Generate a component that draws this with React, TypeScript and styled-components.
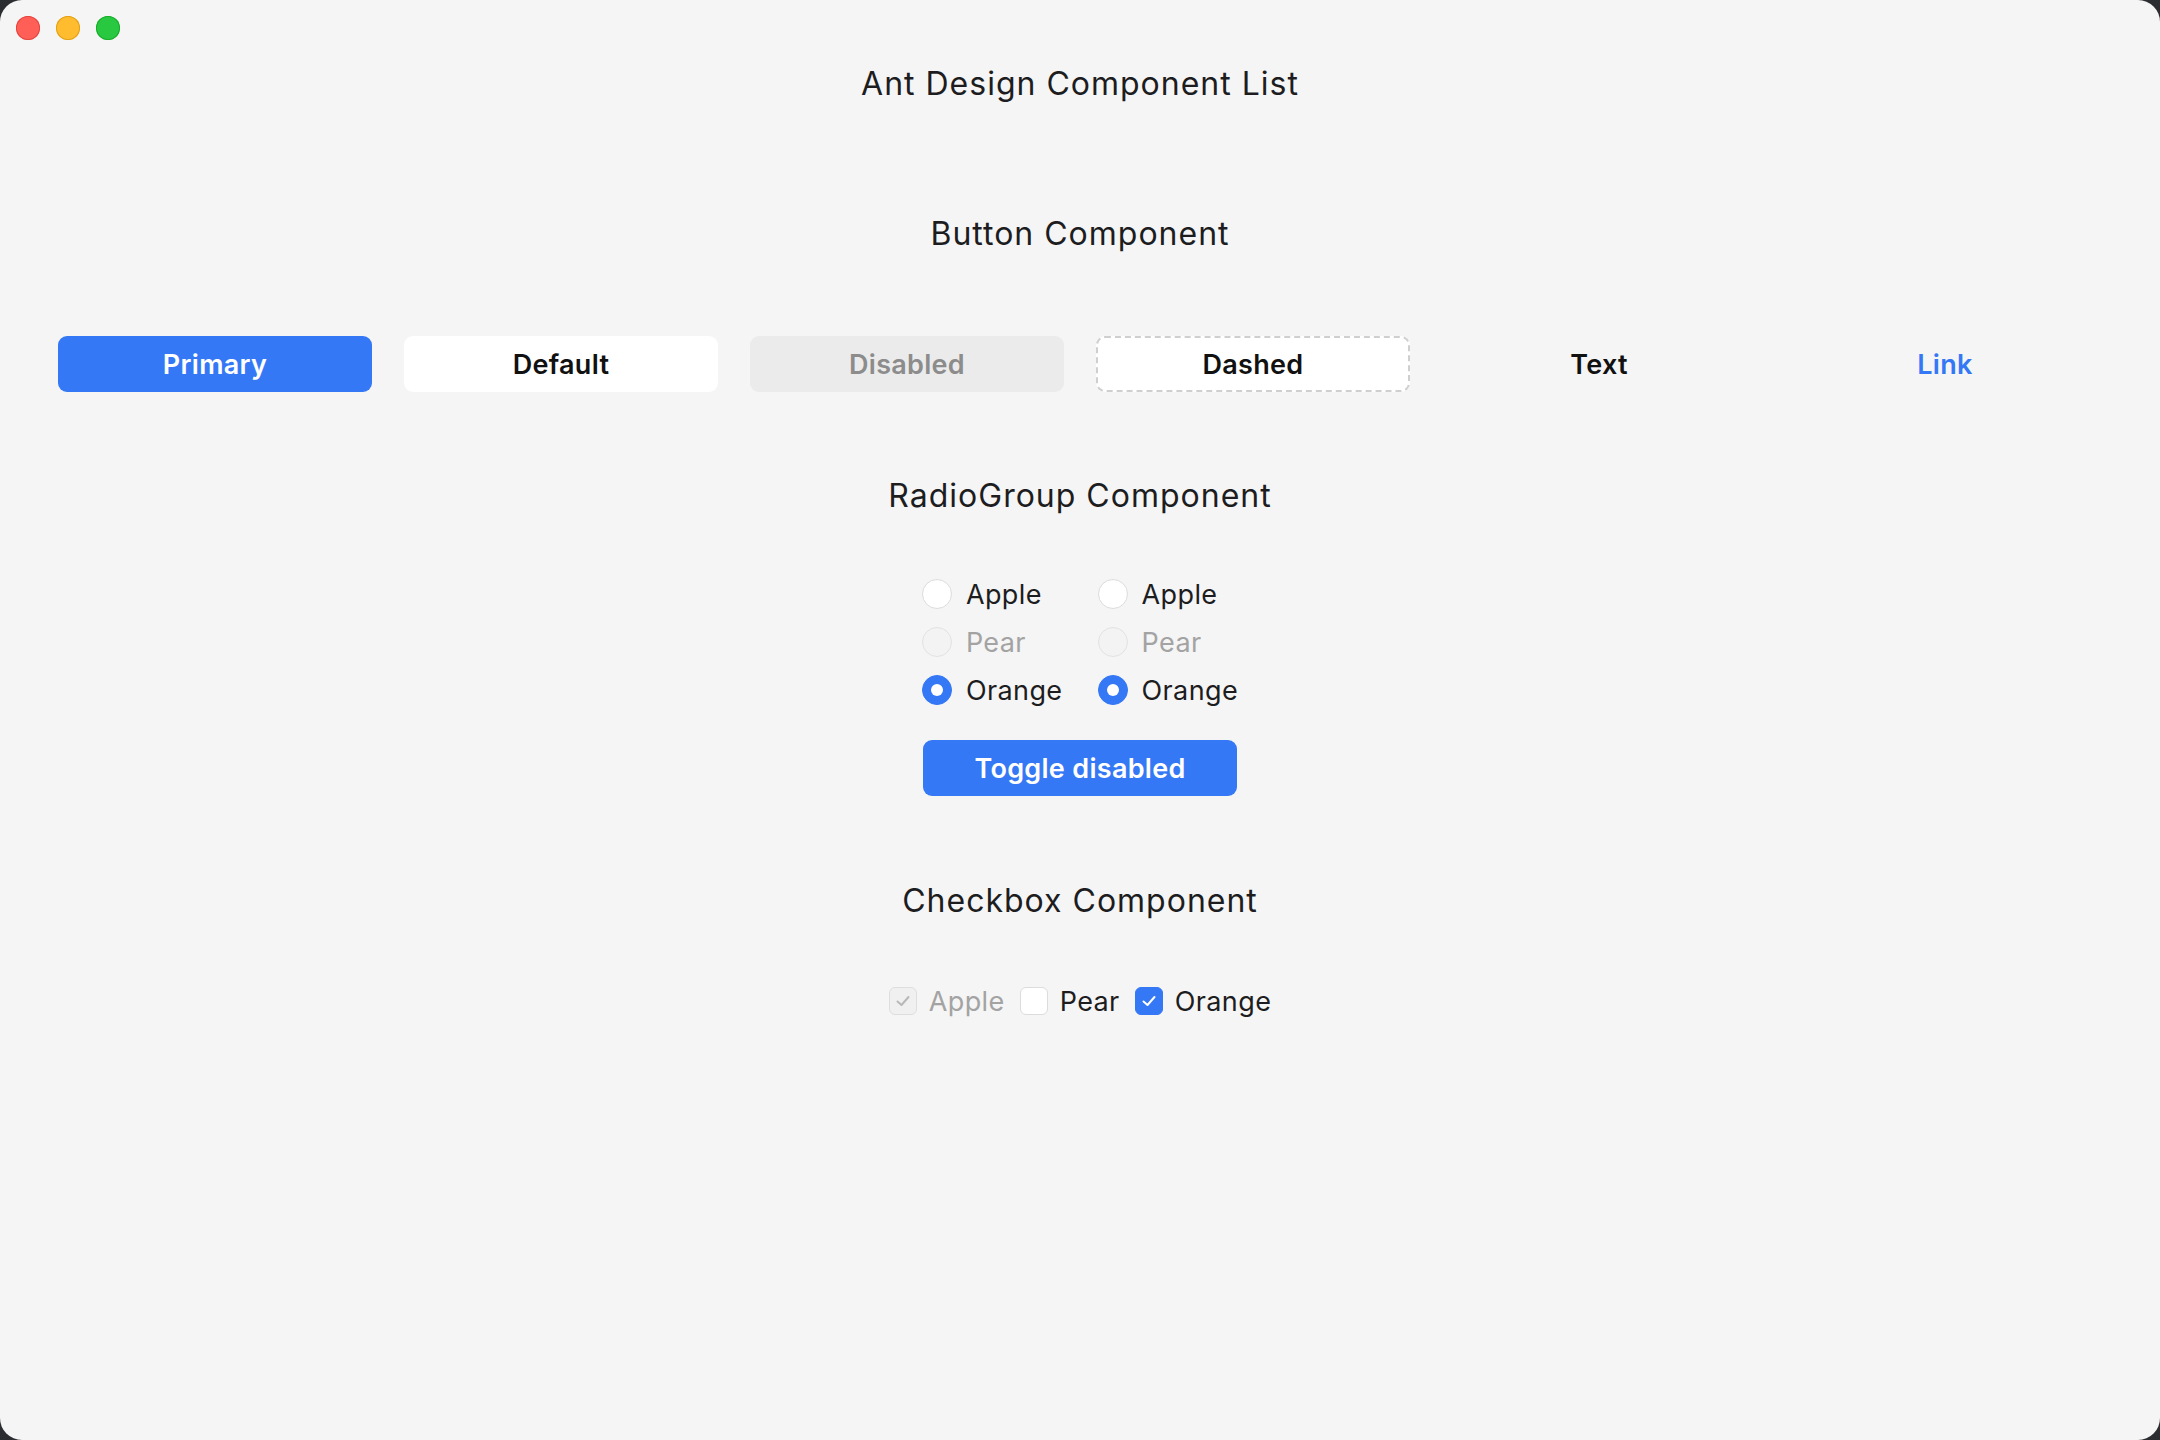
import React from "react";
import styled, { createGlobalStyle, css } from "styled-components";

const GlobalStyle = createGlobalStyle`
  html, body { margin: 0; padding: 0; background: #2c2d30; }
  body { font-family: Inter, "Noto Sans", "Liberation Sans", sans-serif; }
  * { box-sizing: border-box; }
`;

const BLUE = "#3478f6";

const Window = styled.div`
  width: 2160px;
  height: 1440px;
  background: #f5f5f5;
  border-radius: 22px;
  overflow: hidden;
  display: flex;
  flex-direction: column;
  align-items: center;
  color: #1d1d1f;
`;

const TitleBar = styled.div`
  align-self: stretch;
  height: 54px;
  display: flex;
  align-items: center;
  gap: 16px;
  padding-left: 16px;
  padding-top: 2px;
`;

const Light = styled.span<{ $c: string; $b: string }>`
  width: 24px;
  height: 24px;
  border-radius: 50%;
  background: ${(p) => p.$c};
  box-shadow: inset 0 0 0 1px ${(p) => p.$b};
`;

const PageTitle = styled.div`
  height: 60px;
  line-height: 60px;
  font-size: 32px;
  letter-spacing: 1px;
  font-weight: 400;
`;

const Section = styled.section<{ $top: number; $gap: number }>`
  margin-top: ${(p) => p.$top}px;
  display: flex;
  flex-direction: column;
  align-items: center;
  gap: ${(p) => p.$gap}px;
  align-self: stretch;
`;

const Heading = styled.h2`
  margin: 0;
  height: 60px;
  line-height: 60px;
  font-size: 32px;
  font-weight: 400;
  letter-spacing: 1px;
`;

const ButtonRow = styled.div`
  align-self: stretch;
  padding: 0 58px;
  display: grid;
  grid-template-columns: repeat(6, 314px);
  column-gap: 32px;
`;

type Variant = "primary" | "default" | "disabled" | "dashed" | "text" | "link";

const Btn = styled.button<{ $v: Variant }>`
  height: 56px;
  width: 314px;
  border-radius: 9px;
  font-family: Inter, "Noto Sans", sans-serif;
  font-size: 27px;
  font-weight: 600;
  letter-spacing: 0.3px;
  border: 1.5px solid transparent;
  cursor: pointer;
  padding: 0;
  ${(p) =>
    p.$v === "primary" &&
    css`
      background: ${BLUE};
      color: #fff;
    `}
  ${(p) =>
    p.$v === "default" &&
    css`
      background: #fff;
      color: #111;
    `}
  ${(p) =>
    p.$v === "disabled" &&
    css`
      background: #ebebeb;
      color: #8c8c8c;
      cursor: not-allowed;
    `}
  ${(p) =>
    p.$v === "dashed" &&
    css`
      background: #fff;
      color: #111;
      border: 2px dashed #cfcfcf;
    `}
  ${(p) =>
    p.$v === "text" &&
    css`
      background: transparent;
      color: #111;
    `}
  ${(p) =>
    p.$v === "link" &&
    css`
      background: transparent;
      color: ${BLUE};
    `}
`;

const RadioGroups = styled.div`
  display: flex;
  gap: 35px;
  margin-top: -16px;
`;

const RadioColumn = styled.div`
  display: flex;
  flex-direction: column;
`;

const Option = styled.label<{ $disabled?: boolean }>`
  height: 48px;
  display: flex;
  align-items: center;
  gap: 14px;
  font-size: 27px;
  letter-spacing: 0.4px;
  color: ${(p) => (p.$disabled ? "#a3a3a3" : "#1d1d1f")};
`;

const RadioDot = styled.span<{ $checked?: boolean; $disabled?: boolean }>`
  width: 30px;
  height: 30px;
  border-radius: 50%;
  flex: none;
  background: ${(p) => (p.$checked ? BLUE : p.$disabled ? "#f3f3f3" : "#fff")};
  border: 1.5px solid
    ${(p) => (p.$checked ? BLUE : p.$disabled ? "#e2e2e2" : "#dcdcdc")};
  display: flex;
  align-items: center;
  justify-content: center;
  &::after {
    content: "";
    display: ${(p) => (p.$checked ? "block" : "none")};
    width: 12px;
    height: 12px;
    border-radius: 50%;
    background: #fff;
  }
`;

const ToggleBtn = styled(Btn)`
  margin-top: -34px;
`;

const CheckRow = styled.div`
  display: flex;
  align-items: center;
  gap: 15px;
  margin-top: -26px;
`;

const CheckItem = styled(Option)`
  gap: 12px;
`;

const Box = styled.span<{ $checked?: boolean; $disabled?: boolean }>`
  width: 28px;
  height: 28px;
  border-radius: 6px;
  flex: none;
  display: flex;
  align-items: center;
  justify-content: center;
  background: ${(p) => (p.$disabled ? "#f0f0f0" : p.$checked ? BLUE : "#fff")};
  border: 1.5px solid
    ${(p) => (p.$disabled ? "#dedede" : p.$checked ? BLUE : "#dcdcdc")};
`;

const Check = ({ color }: { color: string }) => (
  <svg width="18" height="18" viewBox="0 0 18 18" fill="none">
    <polyline
      points="3.5,9.5 7.5,13 14.5,5"
      stroke={color}
      strokeWidth="2"
      strokeLinecap="round"
      strokeLinejoin="round"
    />
  </svg>
);

const buttons: { v: Variant; label: string }[] = [
  { v: "primary", label: "Primary" },
  { v: "default", label: "Default" },
  { v: "disabled", label: "Disabled" },
  { v: "dashed", label: "Dashed" },
  { v: "text", label: "Text" },
  { v: "link", label: "Link" },
];

const radioOptions = [
  { label: "Apple" },
  { label: "Pear", disabled: true },
  { label: "Orange", checked: true },
];

export default function App() {
  return (
    <>
      <GlobalStyle />
      <Window>
        <TitleBar>
          <Light $c="#ff5f57" $b="#e2463f" />
          <Light $c="#febc2e" $b="#e1a116" />
          <Light $c="#28c840" $b="#1aac2c" />
        </TitleBar>
        <PageTitle>Ant Design Component List</PageTitle>

        <Section $top={90} $gap={72}>
          <Heading>Button Component</Heading>
          <ButtonRow>
            {buttons.map((b) => (
              <Btn key={b.label} $v={b.v}>
                {b.label}
              </Btn>
            ))}
          </ButtonRow>
        </Section>

        <Section $top={74} $gap={60}>
          <Heading>RadioGroup Component</Heading>
          <RadioGroups>
            {[0, 1].map((g) => (
              <RadioColumn key={g}>
                {radioOptions.map((o) => (
                  <Option key={o.label} $disabled={o.disabled}>
                    <RadioDot $checked={o.checked} $disabled={o.disabled} />
                    {o.label}
                  </Option>
                ))}
              </RadioColumn>
            ))}
          </RadioGroups>
          <ToggleBtn $v="primary">Toggle disabled</ToggleBtn>
        </Section>

        <Section $top={75} $gap={72}>
          <Heading>Checkbox Component</Heading>
          <CheckRow>
            <CheckItem $disabled>
              <Box $checked $disabled>
                <Check color="#b8b8b8" />
              </Box>
              Apple
            </CheckItem>
            <CheckItem>
              <Box />
              Pear
            </CheckItem>
            <CheckItem>
              <Box $checked>
                <Check color="#fff" />
              </Box>
              Orange
            </CheckItem>
          </CheckRow>
        </Section>
      </Window>
    </>
  );
}
